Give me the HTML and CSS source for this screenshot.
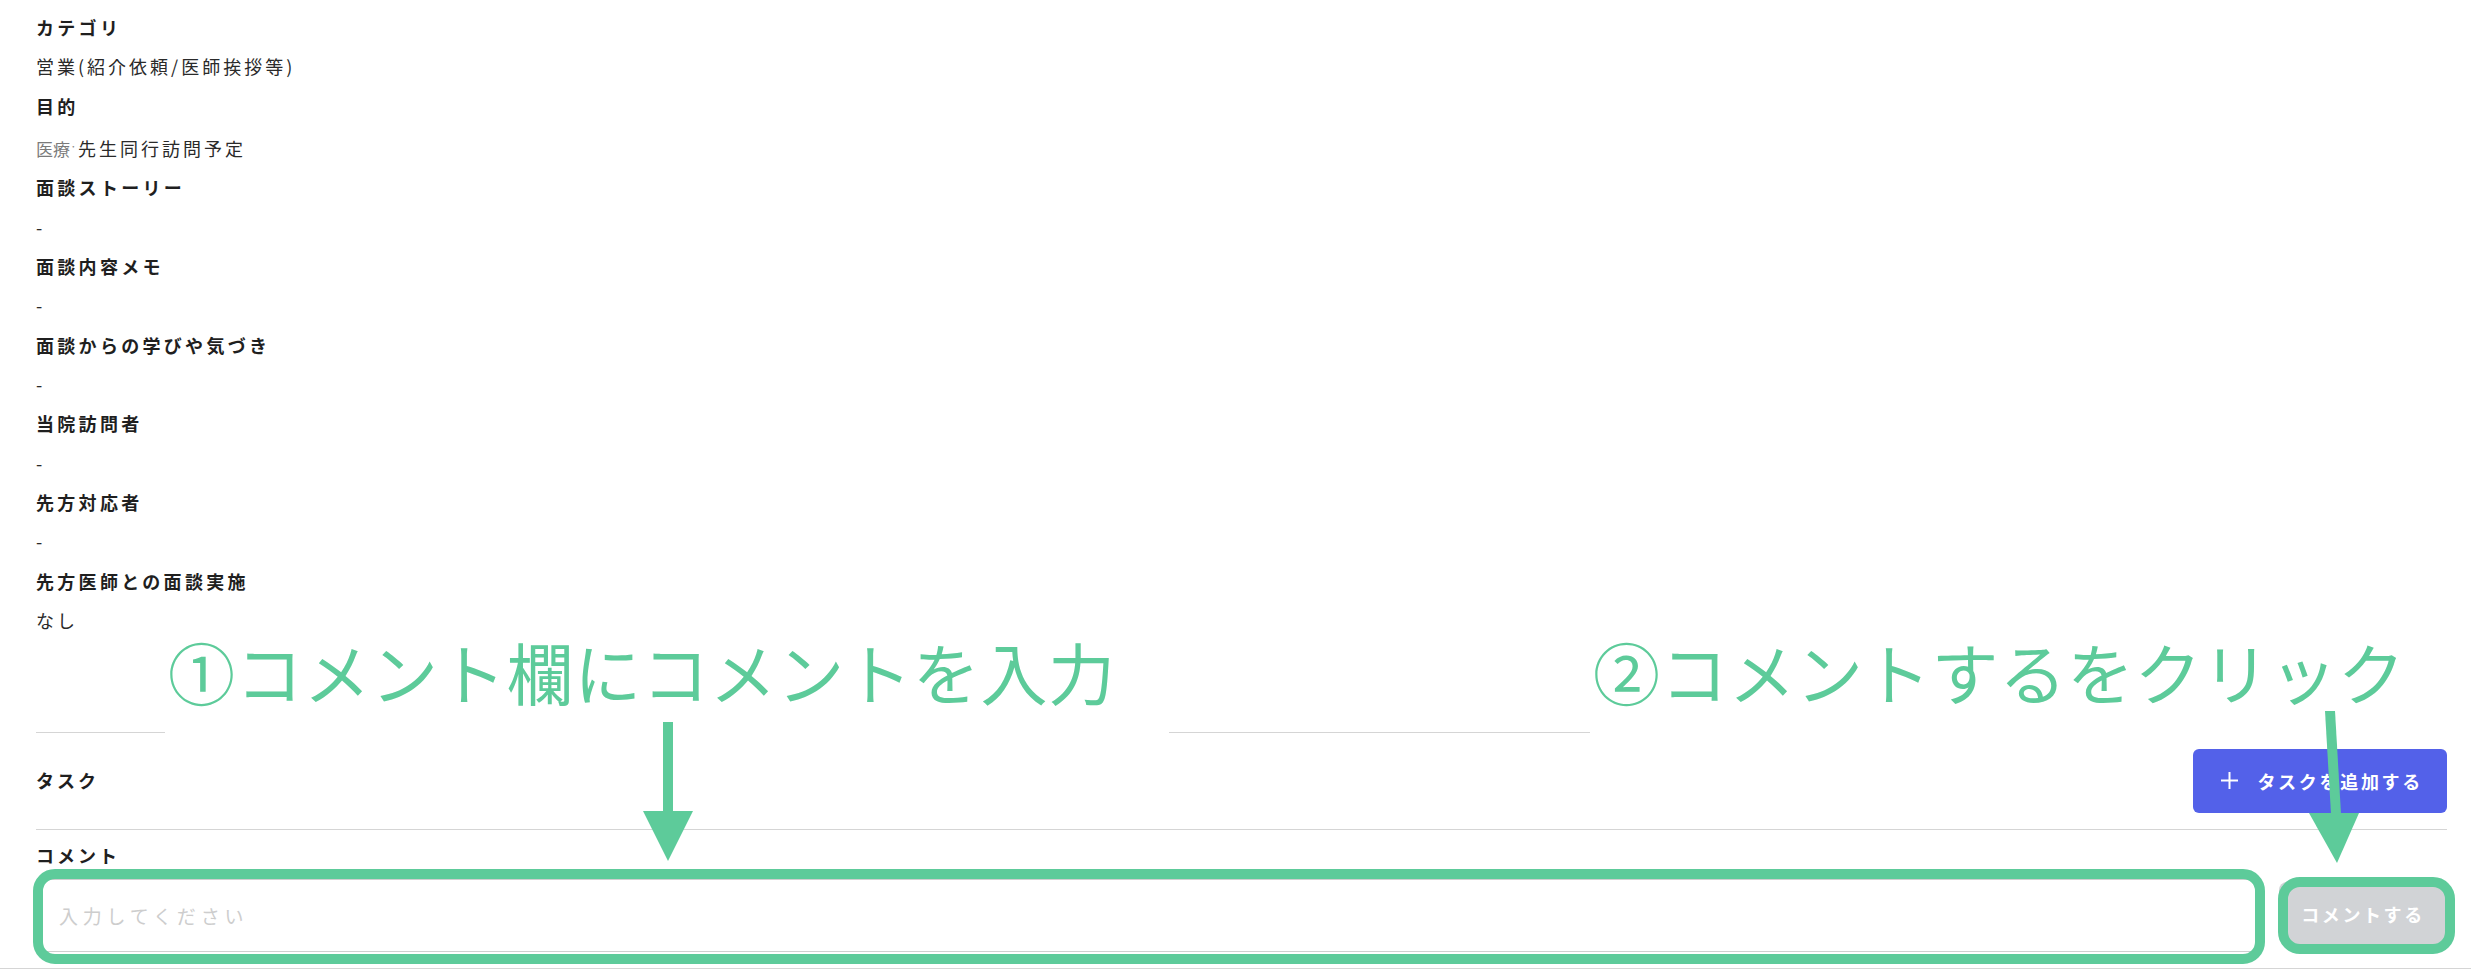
FILE: index.html
```html
<!DOCTYPE html>
<html lang="ja">
<head>
    <meta charset="UTF-8">
    <meta name="viewport" content="width=device-width, initial-scale=1.0">
    <title>面談記録</title>
    <link rel="stylesheet" href="styles.css">
</head>
<body>
    <main class="record">
        <dl class="fields">
            <dt>カテゴリ</dt>
            <dd>営業(紹介依頼/医師挨拶等)</dd>
            <dt>目的</dt>
            <dd><span class="faded">医療</span><span class="faded-dot">·</span>先生同行訪問予定</dd>
            <dt>面談ストーリー</dt>
            <dd>-</dd>
            <dt>面談内容メモ</dt>
            <dd>-</dd>
            <dt>面談からの学びや気づき</dt>
            <dd>-</dd>
            <dt>当院訪問者</dt>
            <dd>-</dd>
            <dt>先方対応者</dt>
            <dd>-</dd>
            <dt>先方医師との面談実施</dt>
            <dd>なし</dd>
        </dl>

        <section class="task-row">
            <h3 class="section-title">タスク</h3>
            <button class="add-task" type="button">
                <svg class="plus" width="19" height="19" viewBox="0 0 19 19">
                    <path d="M9.5 1V18M1 9.5H18" stroke="#fff" stroke-width="2" fill="none"/>
                </svg>
                タスクを追加する
            </button>
        </section>

        <section class="comment">
            <h3 class="section-title">コメント</h3>
            <div class="comment-form">
                <div class="comment-input-wrap">
                    <input class="comment-input" type="text" placeholder="入力してください">
                    <span class="mark mark-input"></span>
                </div>
                <div class="comment-submit-wrap">
                    <button class="comment-submit" type="button" disabled>コメントする</button>
                    <span class="mark mark-submit"></span>
                </div>
            </div>
        </section>
    </main>
    <div class="footer-bar"></div>

    <!-- annotations -->
    <div class="note note-1">①コメント欄にコメントを入力</div>
    <div class="note note-2">②コメントするをクリック</div>
    <svg class="arrows" width="2471" height="972" viewBox="0 0 2471 972">
        <rect x="663" y="722" width="10" height="91" fill="#5dcb9a"/>
        <polygon points="643,811 693,811 668,861" fill="#5dcb9a"/>
        <polygon points="2325,711 2335,711 2341,814 2331,814" fill="#5dcb9a"/>
        <polygon points="2309,813 2359,813 2337,863" fill="#5dcb9a"/>
    </svg>
</body>
</html>
```

FILE: styles.css
```css
body {
    margin: 0;
    position: relative;
    background: #fff;
    color: #1f1f1f;
    font-family: "Noto Sans CJK JP", "Noto Sans", sans-serif;
}

.record {
    padding: 8px 24px 0 36px;
}

.fields {
    margin: 0;
}
.fields dt,
.fields dd {
    margin: 0;
    font-size: 18px;
    line-height: 39.33px;
}
.fields dt {
    font-weight: 700;
    letter-spacing: 3.3px;
}
.fields dd {
    color: #2a2a2a;
    letter-spacing: 3px;
}
.faded {
    color: #7a7a7a;
    font-size: 17px;
    letter-spacing: 0;
}
.faded-dot {
    display: inline-block;
    width: 8px;
    font-size: 12px;
    letter-spacing: 0;
    color: #888;
    vertical-align: 5px;
}

.section-title {
    margin: 0;
    font-size: 18px;
    font-weight: 700;
    line-height: 39.33px;
    letter-spacing: 3px;
}

.task-row {
    display: flex;
    align-items: center;
    justify-content: space-between;
    margin-top: 91.7px;
    padding: 16px 0;
    border-top: 1px solid #d5d5d5;
    border-bottom: 1px solid #d5d5d5;
}
.add-task {
    display: flex;
    align-items: center;
    gap: 18px;
    height: 64px;
    padding: 0 24px 0 27px;
    border: 0;
    border-radius: 6px;
    background: #5361e9;
    color: #fff;
    font-family: inherit;
    font-size: 18px;
    font-weight: 700;
    letter-spacing: 2.7px;
}

.comment {
    padding-top: 6px;
}
.comment-form {
    display: flex;
    align-items: flex-start;
    gap: 20px;
    margin-top: 4px;
}
.comment-input-wrap {
    position: relative;
    flex: 1;
}
.comment-input {
    display: block;
    width: 100%;
    height: 73px;
    box-sizing: border-box;
    padding: 0 22px;
    border: 1px solid #cfcfcf;
    border-radius: 4px;
    font-family: inherit;
    font-size: 19px;
    letter-spacing: 4.8px;
}
.comment-input::placeholder {
    color: #cdcdcd;
}
.comment-submit-wrap {
    position: relative;
    margin-top: 3px;
}
.comment-submit {
    display: block;
    width: 168px;
    height: 63px;
    border: 0;
    border-radius: 8px;
    background: #d1d3d6;
    color: #fff;
    font-family: inherit;
    font-size: 18px;
    font-weight: 700;
    letter-spacing: 2.6px;
}

.footer-bar {
    margin-top: 16px;
    height: 7px;
    border-top: 1px solid #d5d5d5;
}

/* green markers drawn over the screenshot */
.mark {
    position: absolute;
    border: 10px solid #5dcb9a;
    border-radius: 22px;
    pointer-events: none;
}
.mark-input {
    left: -3px;
    right: -6px;
    top: -10px;
    bottom: -12px;
}
.mark-submit {
    left: -1px;
    right: -8px;
    top: -5px;
    bottom: -9px;
}

.note {
    position: absolute;
    top: 637px;
    height: 98px;
    box-sizing: border-box;
    padding-left: 3px;
    background: #fff;
    color: #5dcb9a;
    font-size: 67px;
    line-height: 67px;
    letter-spacing: 0.7px;
    white-space: nowrap;
}
.note-1 {
    left: 165px;
    width: 1004px;
}
.note-2 {
    left: 1590px;
    right: 0;
}

.arrows {
    position: absolute;
    top: 0;
    left: 0;
    pointer-events: none;
}
```
